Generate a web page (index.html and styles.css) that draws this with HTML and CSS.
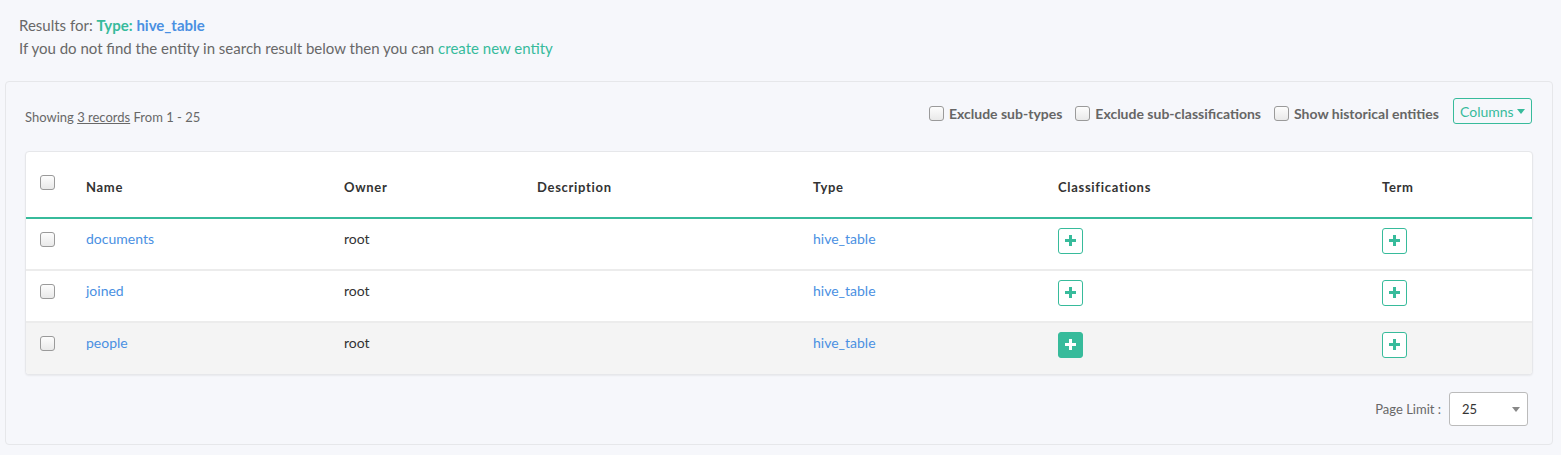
FILE: index.html
```html
<!DOCTYPE html>
<html>
<head>
<meta charset="utf-8">
<link rel="stylesheet" href="styles.css">
</head>
<body>
<div class="intro">
  <div class="line">Results for: <b class="green">Type:</b> <b class="blue">hive_table</b></div>
  <div class="line">If you do not find the entity in search result below then you can <a class="green">create new entity</a></div>
</div>
<div class="panel">
  <div class="toolbar">
    <div class="showing">Showing <u>3 records</u> From 1 - 25</div>
    <div class="filters">
      <label class="filter"><span class="cb"></span>Exclude sub-types</label>
      <label class="filter"><span class="cb"></span>Exclude sub-classifications</label>
      <label class="filter"><span class="cb"></span>Show historical entities</label>
      <button class="columns">Columns<span class="caret"></span></button>
    </div>
  </div>
  <div class="card">
    <div class="row head">
      <div class="c0"><span class="cb"></span></div>
      <div class="c1">Name</div>
      <div class="c2">Owner</div>
      <div class="c3">Description</div>
      <div class="c4">Type</div>
      <div class="c5">Classifications</div>
      <div class="c6">Term</div>
    </div>
    <div class="row">
      <div class="c0"><span class="cb"></span></div>
      <div class="c1"><a class="link">documents</a></div>
      <div class="c2">root</div>
      <div class="c3"></div>
      <div class="c4"><a class="link">hive_table</a></div>
      <div class="c5"><span class="plus"></span></div>
      <div class="c6"><span class="plus"></span></div>
    </div>
    <div class="row">
      <div class="c0"><span class="cb"></span></div>
      <div class="c1"><a class="link">joined</a></div>
      <div class="c2">root</div>
      <div class="c3"></div>
      <div class="c4"><a class="link">hive_table</a></div>
      <div class="c5"><span class="plus"></span></div>
      <div class="c6"><span class="plus"></span></div>
    </div>
    <div class="row hover">
      <div class="c0"><span class="cb"></span></div>
      <div class="c1"><a class="link">people</a></div>
      <div class="c2">root</div>
      <div class="c3"></div>
      <div class="c4"><a class="link">hive_table</a></div>
      <div class="c5"><span class="plus filled"></span></div>
      <div class="c6"><span class="plus"></span></div>
    </div>
  </div>
  <div class="pager">
    <span class="pl">Page Limit :</span>
    <div class="select"><span>25</span><span class="scaret"></span></div>
  </div>
</div>
</body>
</html>
```
FILE: styles.css
```css
* { box-sizing: border-box; }
body {
  margin: 0;
  background: #f6f7fb;
  font-family: Lato, "Open Sans", sans-serif;
  font-size: 13px;
  color: #686868;
  width: 1561px;
  height: 455px;
  overflow: hidden;
}
.intro {
  padding: 14px 19px 0;
  height: 81px;
}
.intro .line {
  font-size: 15px;
  line-height: 23px;
}
.green { color: #37bb9b; }
.blue { color: #4a90e2; }
a.green { text-decoration: none; }
.panel {
  margin-left: 5px;
  width: 1548px;
  height: 364px;
  border: 1px solid #e6e7ea;
  border-radius: 4px;
  background: #f6f7fb;
  padding: 0 19px;
}
.toolbar {
  display: flex;
  justify-content: space-between;
  align-items: center;
  height: 69px;
  padding-right: 1px;
}
.showing {
  font-size: 13px;
  color: #686868;
  padding-top: 1px;
}
.showing u { color: #686868; }
.filters {
  display: flex;
  align-items: center;
  margin-top: -6px;
}
.filter {
  display: flex;
  align-items: center;
  font-weight: bold;
  font-size: 14px;
  color: #666;
  margin-right: 13px;
}
.filter .cb { margin-right: 5px; }
.cb {
  display: inline-block;
  width: 15px;
  height: 15px;
  border: 1px solid #9a9a9a;
  border-radius: 3px;
  background: linear-gradient(#fdfdfd, #e9e9e9);
}
.columns {
  margin-left: 1px;
  height: 26px;
  width: 79px;
  padding: 0 6px;
  background: transparent;
  border: 1px solid #37bb9b;
  border-radius: 3px;
  color: #37bb9b;
  font-family: Lato, sans-serif;
  font-size: 14px;
  display: flex;
  align-items: center;
  margin-top: -5px;
}
.caret {
  display: inline-block;
  margin-left: 3px;
  border-left: 4px solid transparent;
  border-right: 4px solid transparent;
  border-top: 5px solid #37bb9b;
}
.card {
  background: #fff;
  border: 1px solid #e6e7ea;
  border-radius: 4px;
  box-shadow: 0 1px 2px rgba(0,0,0,0.06);
}
.row {
  display: flex;
  align-items: center;
  height: 52px;
  border-bottom: 2px solid #ececec;
  color: #333;
  font-size: 14px;
}
.row:last-child { border-bottom: none; height: 51px; }
.row.head {
  height: 67px;
  padding-top: 5px;
  border-bottom: 2px solid #37bb9b;
  font-weight: bold;
  font-size: 13px;
  letter-spacing: 0.7px;
  color: #333;
}
.row.head .cb { margin-top: -10px; }
.row.hover { background: #f4f4f4; border-radius: 0 0 4px 4px; }
.c0 { width: 60px; padding-left: 14px; display: flex; }
.c1 { width: 258px; }
.c2 { width: 193px; }
.c3 { width: 276px; }
.c4 { width: 245px; }
.c5 { width: 324px; }
.c6 { flex: 1; }
.row:not(.head) > div { margin-top: -12px; }
.row:not(.head) > .c0 { margin-top: -10px; }
.row:not(.head) > .c5, .row:not(.head) > .c6 { margin-top: -7px; }
.link { color: #4a90e2; text-decoration: none; }
.plus {
  display: inline-block;
  position: relative;
  width: 25px;
  height: 26px;
  border: 1px solid #37bb9b;
  border-radius: 3px;
  background: #fff;
  vertical-align: middle;
}
.plus::before, .plus::after {
  content: "";
  position: absolute;
  background: #37bb9b;
}
.plus::before { left: 6px; top: 10px; width: 11px; height: 3px; }
.plus::after { left: 10px; top: 6px; width: 3px; height: 11px; }
.plus.filled { background: #37bb9b; }
.plus.filled::before, .plus.filled::after { background: #fff; }
.pager {
  display: flex;
  justify-content: flex-end;
  align-items: center;
  margin-top: 17px;
  padding-right: 5px;
}
.pl { font-size: 13px; color: #686868; margin-right: 8px; }
.select {
  width: 79px;
  height: 34px;
  border: 1px solid #bbb;
  border-radius: 3px;
  background: #fff;
  display: flex;
  align-items: center;
  justify-content: space-between;
  padding: 0 7px 0 12px;
  color: #333;
  font-size: 13px;
}
.scaret {
  border-left: 4px solid transparent;
  border-right: 4px solid transparent;
  border-top: 5px solid #888;
}
```
